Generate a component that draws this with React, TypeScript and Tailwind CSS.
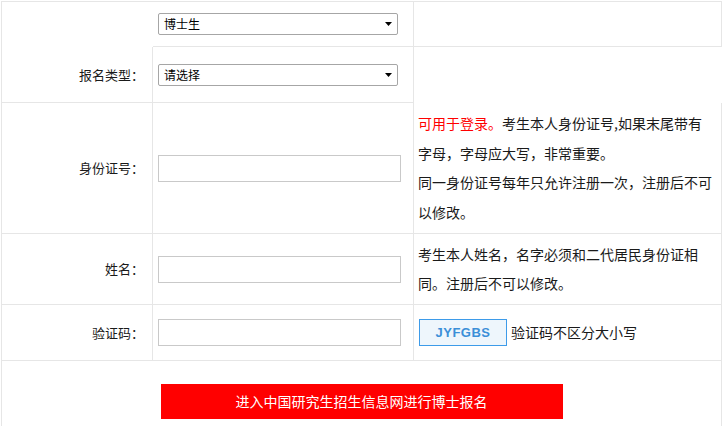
import React from "react";

const font = { fontFamily: '"Noto Sans CJK SC", "Noto Sans", sans-serif' };

function FakeSelect({ text }: { text: string }) {
  return (
    <div className="ml-[5px] flex h-[22px] w-[240px] items-center justify-between rounded-[2px] border border-[#a6a6a6] bg-white pl-[5px] pr-[5px] text-[12px] text-black">
      <span className="leading-none">{text}</span>
      <svg width="7" height="4" viewBox="0 0 7 4">
        <path d="M0 0H7L3.5 4Z" fill="#000" />
      </svg>
    </div>
  );
}

function TextInput() {
  return <div className="ml-[5px] h-[27px] w-[243px] border border-[#c9c9c9] bg-white" />;
}

function Label({ text }: { text: string }) {
  return (
    <div className="flex w-[151px] shrink-0 items-center justify-end border-r border-[#e6e6e6] pr-[8px] text-[13px] text-[#1a1a1a]">
      {text}
    </div>
  );
}

export default function App() {
  return (
    <div className="min-h-[426px] bg-white" style={font}>
      <div className="ml-px mt-px w-[721px] border-l border-t border-[#e6e6e6]">
        {/* top block */}
        <div className="flex">
          <div className="flex w-[412px] shrink-0 flex-col border-r border-[#e6e6e6]">
            <div className="flex h-[45px] items-center">
              <div className="w-[151px] shrink-0" />
              <div className="flex h-full w-[260px] items-center border-b border-[#e6e6e6]">
                <FakeSelect text="博士生" />
              </div>
            </div>
            <div className="flex h-[56px] border-b border-[#e6e6e6]">
              <Label text="报名类型：" />
              <div className="flex w-[260px] items-center">
                <FakeSelect text="请选择" />
              </div>
            </div>
          </div>
          <div className="flex w-[308px] shrink-0 flex-col">
            <div className="h-[45px] border-b border-r border-[#e6e6e6]" />
          </div>
        </div>

        {/* ID row */}
        <div className="flex h-[131px] border-b border-[#e6e6e6]">
          <Label text="身份证号：" />
          <div className="flex w-[261px] shrink-0 items-center border-r border-[#e6e6e6]">
            <TextInput />
          </div>
          <div className="flex w-[308px] shrink-0 items-center border-r border-[#e6e6e6] pl-[4px] text-[14px] leading-[29.5px] text-[#1a1a1a]">
            <div className="whitespace-nowrap">
              <span className="text-[#ff0000]">可用于登录。</span>考生本人身份证号,如果末尾带有
              <br />
              字母，字母应大写，非常重要。
              <br />
              同一身份证号每年只允许注册一次，注册后不可
              <br />
              以修改。
            </div>
          </div>
        </div>

        {/* name row */}
        <div className="flex h-[71px] border-b border-[#e6e6e6]">
          <Label text="姓名：" />
          <div className="flex w-[261px] shrink-0 items-center border-r border-[#e6e6e6]">
            <TextInput />
          </div>
          <div className="flex w-[308px] shrink-0 items-center border-r border-[#e6e6e6] pl-[4px] text-[14px] leading-[29.5px] text-[#1a1a1a]">
            <div className="whitespace-nowrap">
              考生本人姓名，名字必须和二代居民身份证相
              <br />
              同。注册后不可以修改。
            </div>
          </div>
        </div>

        {/* captcha row */}
        <div className="flex h-[56px] border-b border-[#e6e6e6]">
          <Label text="验证码：" />
          <div className="flex w-[261px] shrink-0 items-center border-r border-[#e6e6e6]">
            <TextInput />
          </div>
          <div className="flex w-[308px] shrink-0 items-center border-r border-[#e6e6e6] pl-[5px] text-[14px] text-[#1a1a1a]">
            <div
              className="flex h-[27px] w-[88px] items-center justify-center border border-[#3d9be9] bg-[#eef6fc] text-[13px] font-bold tracking-[0.5px] text-[#3b8fd8]"
              style={{ fontFamily: '"Liberation Sans", Arial, sans-serif' }}
            >
              JYFGBS
            </div>
            <span className="ml-[4px]">验证码不区分大小写</span>
          </div>
        </div>

        {/* button row */}
        <div className="flex h-[66px] justify-center border-r border-[#e6e6e6] pt-[23px]">
          <div className="flex h-[35px] w-[402px] items-center justify-center bg-[#ff0000] text-[14px] text-white">
            进入中国研究生招生信息网进行博士报名
          </div>
        </div>
      </div>
    </div>
  );
}
